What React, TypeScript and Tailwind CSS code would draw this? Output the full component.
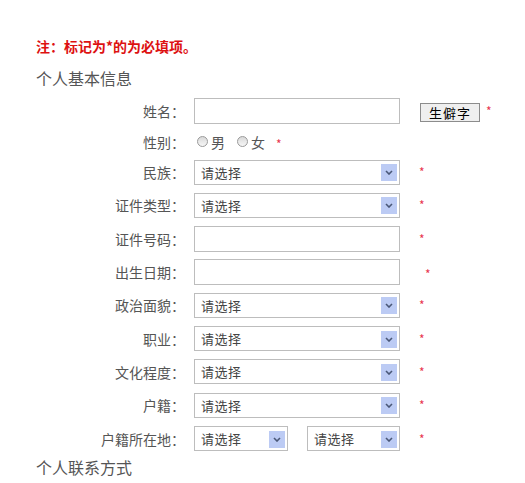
const font = '"Noto Sans CJK SC", "Noto Sans", sans-serif';

function Star({ className = '' }: { className?: string }) {
  return <span className={`text-[12px] leading-none text-[#e8364f] ${className}`}>*</span>;
}

function Label({ text }: { text: string }) {
  return (
    <div className="w-[149px] shrink-0 text-right text-[14px] leading-none text-[#555]">{text}</div>
  );
}

function Select({ width }: { width: string }) {
  return (
    <div
      className={`${width} flex h-[25px] items-center justify-between border border-[#bdbdbd] bg-white pl-[6px] pr-[2px]`}
    >
      <span className="text-[13px] leading-none tracking-[0.5px] text-[#444]">请选择</span>
      <span className="mt-[1px] flex h-[17px] w-[16px] items-center justify-center bg-[#bccbf4]">
        <svg width="8" height="5" viewBox="0 0 8 5">
          <path d="M1 1 L4 4 L7 1" fill="none" stroke="#4a5878" strokeWidth="1.6" />
        </svg>
      </span>
    </div>
  );
}

function TextInput() {
  return <div className="h-[26px] w-[206px] border border-[#bdbdbd] bg-white" />;
}

function Radio({ text }: { text: string }) {
  return (
    <span className="flex items-center gap-[3px]">
      <span className="h-[11px] w-[11px] rounded-full border border-[#9a9a9a] bg-gradient-to-b from-[#d9d9d9] to-[#f7f7f7]" />
      <span className="text-[14px] leading-none text-[#555]">{text}</span>
    </span>
  );
}

const selectRows = ['民族：', '证件类型：'];
const selectRows2 = ['政治面貌：', '职业：', '文化程度：', '户籍：'];

function Row({ children, h = 'h-[33.3px]' }: { children: React.ReactNode; h?: string }) {
  return <div className={`flex ${h} items-center`}>{children}</div>;
}

export default function App() {
  return (
    <div className="min-h-[483px] w-[525px] bg-white pl-9 pt-9" style={{ fontFamily: font }}>
      <p className="text-[14px] font-bold leading-[20px] text-[#dd1111]">注：标记为*的为必填项。</p>
      <h2 className="mt-[9.5px] text-[16px] leading-[24px] text-[#555]">个人基本信息</h2>

      <div className="mt-[5px]">
        <Row h="h-[33px]">
          <Label text="姓名：" />
          <div className="ml-[9px] flex items-center">
            <TextInput />
            <button className="ml-[20px] mt-[2px] h-[19px] w-[60px] border border-[#8c8c8c] bg-[#efefef] text-[13px] leading-none tracking-[1px] text-black">
              生僻字
            </button>
            <Star className="ml-[6px]" />
          </div>
        </Row>
        <Row h="h-[28px]">
          <Label text="性别：" />
          <div className="ml-[12px] flex items-center gap-[12px]">
            <Radio text="男" />
            <Radio text="女" />
            <Star className="-ml-[1px] mt-[5px]" />
          </div>
        </Row>
        {selectRows.map((t) => (
          <Row key={t}>
            <Label text={t} />
            <div className="ml-[9px] flex items-center">
              <Select width="w-[206px]" />
              <Star className="ml-[19px]" />
            </div>
          </Row>
        ))}
        <Row>
          <Label text="证件号码：" />
          <div className="ml-[9px] flex items-center">
            <TextInput />
            <Star className="ml-[19px]" />
          </div>
        </Row>
        <Row>
          <Label text="出生日期：" />
          <div className="ml-[9px] flex items-center">
            <TextInput />
            <Star className="ml-[25px] mt-[4px]" />
          </div>
        </Row>
        {selectRows2.map((t) => (
          <Row key={t}>
            <Label text={t} />
            <div className="ml-[9px] flex items-center">
              <Select width="w-[206px]" />
              <Star className="ml-[19px]" />
            </div>
          </Row>
        ))}
        <Row>
          <Label text="户籍所在地：" />
          <div className="ml-[9px] flex items-center">
            <Select width="w-[94px]" />
            <div className="ml-[19px]">
              <Select width="w-[93px]" />
            </div>
            <Star className="ml-[19px]" />
          </div>
        </Row>
      </div>

      <h2 className="text-[16px] leading-[24px] text-[#555]">个人联系方式</h2>
    </div>
  );
}
